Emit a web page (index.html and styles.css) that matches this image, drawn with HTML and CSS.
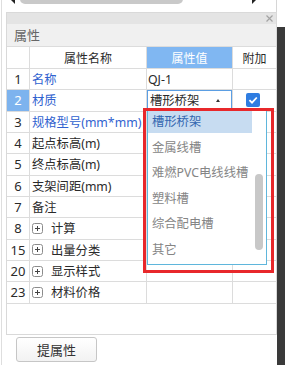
FILE: index.html
```html
<!DOCTYPE html>
<html lang="zh-CN">
<head>
    <meta charset="UTF-8">
    <title>属性</title>
    <link rel="stylesheet" href="styles.css">
</head>
<body>

    <div class="shell">
        <!-- horizontal scrollbar, cut off at the top -->
        <div class="hscroll">
            <span class="arrow-left"></span>
            <span class="thumb"></span>
            <span class="arrow-right"></span>
        </div>

        <div class="panel">
            <div class="panel-bar">
                <svg class="close" width="7" height="7" viewBox="0 0 7 7"><path d="M0.5 0.5L6.5 6.5M6.5 0.5L0.5 6.5" stroke="#a3a3a3" stroke-width="1.2"/></svg>
            </div>
            <div class="panel-title">属性</div>

            <!-- Property grid -->
            <div class="grid">
                <div class="cell"></div>
                <div class="cell head">属性名称</div>
                <div class="cell head head-active">属性值</div>
                <div class="cell head last">附加</div>

                <div class="cell num">1</div>
                <div class="cell name key">名称</div>
                <div class="cell value">QJ-1</div>
                <div class="cell last"></div>

                <div class="cell num num-active">2</div>
                <div class="cell name key">材质</div>
                <div class="cell value value-edit">
                    <div class="select">槽形桥架<span class="caret"></span></div>
                </div>
                <div class="cell last check-cell">
                    <svg width="14" height="14" viewBox="0 0 14 14"><rect width="14" height="14" rx="2" fill="#2f7de1"/><path d="M3.4 7.1L6 9.7L10.8 4.5" fill="none" stroke="#fff" stroke-width="1.8"/></svg>
                </div>

                <div class="cell num">3</div>
                <div class="cell name key">规格型号(mm*mm)</div>
                <div class="cell value"></div>
                <div class="cell last"></div>

                <div class="cell num">4</div>
                <div class="cell name">起点标高(m)</div>
                <div class="cell value"></div>
                <div class="cell last"></div>

                <div class="cell num">5</div>
                <div class="cell name">终点标高(m)</div>
                <div class="cell value"></div>
                <div class="cell last"></div>

                <div class="cell num">6</div>
                <div class="cell name">支架间距(mm)</div>
                <div class="cell value"></div>
                <div class="cell last"></div>

                <div class="cell num">7</div>
                <div class="cell name">备注</div>
                <div class="cell value"></div>
                <div class="cell last"></div>

                <div class="cell num">8</div>
                <div class="cell name"><svg class="expand" width="11" height="11" viewBox="0 0 11 11"><rect x="0.5" y="0.5" width="10" height="10" rx="2" fill="#fff" stroke="#8c8c8c"/><path d="M3 5.5H8M5.5 3V8" stroke="#444"/></svg>计算</div>
                <div class="cell value"></div>
                <div class="cell last"></div>

                <div class="cell num">15</div>
                <div class="cell name"><svg class="expand" width="11" height="11" viewBox="0 0 11 11"><rect x="0.5" y="0.5" width="10" height="10" rx="2" fill="#fff" stroke="#8c8c8c"/><path d="M3 5.5H8M5.5 3V8" stroke="#444"/></svg>出量分类</div>
                <div class="cell value"></div>
                <div class="cell last"></div>

                <div class="cell num">20</div>
                <div class="cell name"><svg class="expand" width="11" height="11" viewBox="0 0 11 11"><rect x="0.5" y="0.5" width="10" height="10" rx="2" fill="#fff" stroke="#8c8c8c"/><path d="M3 5.5H8M5.5 3V8" stroke="#444"/></svg>显示样式</div>
                <div class="cell value"></div>
                <div class="cell last"></div>

                <div class="cell num">23</div>
                <div class="cell name"><svg class="expand" width="11" height="11" viewBox="0 0 11 11"><rect x="0.5" y="0.5" width="10" height="10" rx="2" fill="#fff" stroke="#8c8c8c"/><path d="M3 5.5H8M5.5 3V8" stroke="#444"/></svg>材料价格</div>
                <div class="cell value"></div>
                <div class="cell last"></div>

                <!-- open dropdown of 材质 -->
                <div class="dropdown">
                    <ul>
                        <li class="active">槽形桥架</li>
                        <li>金属线槽</li>
                        <li>难燃PVC电线线槽</li>
                        <li>塑料槽</li>
                        <li>综合配电槽</li>
                        <li>其它</li>
                    </ul>
                    <div class="track"><div class="track-thumb"></div></div>
                </div>

                <!-- red highlight frame -->
                <div class="callout"></div>
            </div>
            <div class="grid-fill"></div>
        </div>

        <div class="actions">
            <button type="button">提属性</button>
        </div>
    </div>

    <div class="vscroll"></div>

</body>
</html>
```

FILE: styles.css
```css
* {
    margin: 0;
    padding: 0;
    box-sizing: border-box;
}

body {
    font-family: "Noto Sans", "Noto Sans CJK SC", sans-serif;
    font-size: 12px;
    color: #2a2a2a;
    background-color: #fff;
    display: flex;
    height: 365px;
    overflow: hidden;
}

.shell {
    width: 276px;
    margin-left: 1px;
    border-left: 1px solid #dedede;
}

/* Top scrollbar */
.hscroll {
    height: 12px;
    border-right: 1px solid #d6d6d6;
    display: flex;
    align-items: flex-start;
    overflow: hidden;
}

.hscroll .arrow-left {
    margin-left: 9px;
    margin-top: -4px;
    border-top: 4px solid transparent;
    border-bottom: 4px solid transparent;
    border-right: 4px solid #222;
}

.hscroll .thumb {
    margin-left: 5px;
    width: 163px;
    height: 10px;
    margin-top: -6px;
    border-radius: 5px;
    background-color: #c9c9c9;
}

.hscroll .arrow-right {
    margin-left: 69px;
    margin-top: -4px;
    border-top: 4px solid transparent;
    border-bottom: 4px solid transparent;
    border-left: 4px solid #222;
}

/* Panel */
.panel {
    margin-left: 4px;
    width: 271px;
    border: 1px solid #d9d9d9;
    background-color: #fff;
}

.panel-bar {
    height: 11px;
    background-color: #e4e4e4;
    display: flex;
    justify-content: flex-end;
    align-items: center;
    padding-right: 3px;
}

.panel-title {
    height: 23px;
    line-height: 22px;
    padding-left: 7px;
    background-color: #f0f0f0;
    border-bottom: 1px solid #dcdcdc;
    font-size: 13px;
    color: #666;
}

/* Property grid */
.grid {
    position: relative;
    display: grid;
    grid-template-columns: 23px 117px 86px 43px;
    grid-template-rows: 22px;
    grid-auto-rows: 21.33px;
}

.cell {
    display: flex;
    align-items: center;
    white-space: nowrap;
    overflow: hidden;
    border-right: 1px solid #dcdcdc;
    border-bottom: 1px solid #dcdcdc;
}

.cell.last {
    border-right: none;
    justify-content: center;
}

.head {
    justify-content: center;
}

.head-active {
    background-color: #80b7f2;
    color: #fff;
}

.num {
    justify-content: center;
    font-size: 13px;
}

.num-active {
    background-color: #7db3ee;
    color: #fff;
}

.name {
    padding-left: 2px;
    font-size: 12.3px;
}

.name.key {
    color: #3062cf;
}

.expand {
    flex-shrink: 0;
    margin-right: 8px;
}

.value {
    padding-left: 1px;
    font-size: 12.3px;
}

.value-edit {
    padding: 0;
    align-items: stretch;
}

.select {
    flex: 1;
    display: flex;
    align-items: center;
    justify-content: space-between;
    padding: 0 11px 0 2px;
    border: 1px solid #5b9ee3;
}

.caret {
    border-left: 2px solid transparent;
    border-right: 2px solid transparent;
    border-bottom: 3px solid #333;
}

.check-cell svg {
    margin-left: -3px;
}

/* Dropdown list */
.dropdown {
    position: absolute;
    left: 140px;
    top: 63px;
    width: 120px;
    height: 155px;
    display: flex;
    border: 1px solid #5fb6dc;
    background-color: #fff;
}

.dropdown ul {
    list-style: none;
    width: 104px;
}

.dropdown li {
    height: 22px;
    line-height: 22px;
    margin-bottom: 3.5px;
    padding-left: 4px;
    font-size: 12.3px;
    color: #858585;
    white-space: nowrap;
}

.dropdown li.active {
    background-color: #c7dcf1;
    color: #3467b0;
}

.track {
    flex: 1;
}

.track-thumb {
    margin: 63px 0 0 3px;
    width: 8px;
    height: 76px;
    border-radius: 4px;
    background-color: #c8c8c8;
}

.callout {
    position: absolute;
    left: 136px;
    top: 61px;
    width: 131px;
    height: 165px;
    border: 3px solid #e8282b;
}

.grid-fill {
    height: 30px;
}

/* Bottom button */
.actions {
    padding: 2px 0 0 14px;
}

button {
    width: 81px;
    height: 25px;
    border: 1px solid #c6c6c6;
    border-radius: 3px;
    background: linear-gradient(#fff, #f2f2f2);
    font-family: "Noto Sans", "Noto Sans CJK SC", sans-serif;
    font-size: 13px;
    color: #333;
}

.vscroll {
    width: 8px;
    margin-top: 27px;
    background-color: #3a3a3a;
}
```
